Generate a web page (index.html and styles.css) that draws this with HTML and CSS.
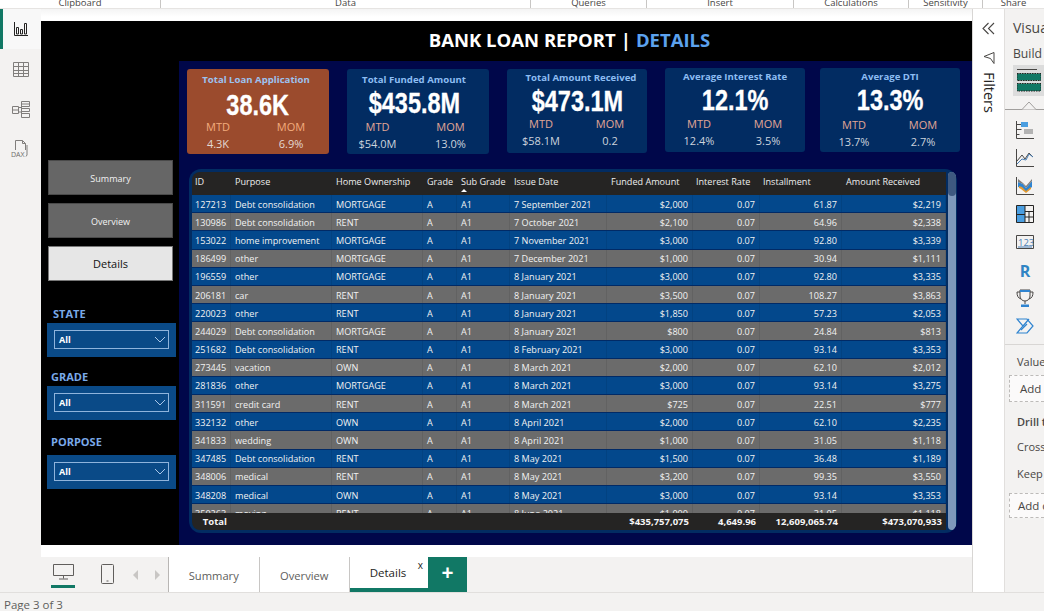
FILE: index.html
```html
<!DOCTYPE html>
<html lang="en">
<head>
<meta charset="utf-8">
<title>Bank Loan Report</title>
<link rel="stylesheet" href="styles.css">
</head>
<body>
<header class="ribbon">
  <div class="rb rb-1">Clipboard</div>
  <div class="rb rb-2">Data</div>
  <div class="rb rb-3">Queries</div>
  <div class="rb rb-4">Insert</div>
  <div class="rb rb-5">Calculations</div>
  <div class="rb rb-6">Sensitivity</div>
  <div class="rb rb-7">Share</div>
</header>
<div class="main">
  <nav class="nav">
    <div class="nav-item nav-active">
      <svg width="16" height="16" viewBox="0 0 16 16" fill="none" stroke="#252423"><path d="M1.500 1v13.500H15"/><path d="M3.500 13V6.500h2V13zM7.500 13V8.500h2V13zM11.500 13V2.500h2V13z"/></svg>
    </div>
    <div class="nav-item">
      <svg width="18" height="18" viewBox="0 0 18 18" fill="none" stroke="#807e7c"><path d="M1.500 2.500h15v14h-15zM1.500 6.500h15M1.500 10.500h15M1.500 13.500h15M6.500 2.500v14M11.500 2.500v14"/></svg>
    </div>
    <div class="nav-item">
      <svg width="20" height="20" viewBox="0 0 20 20" fill="none" stroke="#807e7c"><path d="M1.500 7.500h6v7h-6zM1.500 11h6M10.500 2.500h8v5h-8zM10.500 5h8M10.500 9.500h8v3h-8zM10.500 14.500h8v4h-8zM7.500 8.500h3M7.500 13h3M10.500 5v12"/></svg>
    </div>
    <div class="nav-item">
      <svg width="20" height="22" viewBox="0 0 20 22" fill="none" stroke="#807e7c"><path d="M4.500 12V2.500h7l3 3V12M11.500 2.500v3h3M16 7v10l-1 1.500"/><text class="dax" x="0" y="18.500">DAX</text></svg>
    </div>
  </nav>
  <div class="workspace">
    <section class="canvas">
      <aside class="side">
        <div class="btn">Summary</div>
        <div class="btn">Overview</div>
        <div class="btn btn-on">Details</div>
        <div class="slabel slabel-state">STATE</div>
        <div class="slicer"><div class="dd"><span>All</span><svg width="12" height="7" viewBox="0 0 12 7" fill="none" stroke="#a9c6e8"><path d="M1 1l5 5 5-5"/></svg></div></div>
        <div class="slabel slabel-grade">GRADE</div>
        <div class="slicer"><div class="dd"><span>All</span><svg width="12" height="7" viewBox="0 0 12 7" fill="none" stroke="#a9c6e8"><path d="M1 1l5 5 5-5"/></svg></div></div>
        <div class="slabel slabel-purpose">PORPOSE</div>
        <div class="slicer"><div class="dd"><span>All</span><svg width="12" height="7" viewBox="0 0 12 7" fill="none" stroke="#a9c6e8"><path d="M1 1l5 5 5-5"/></svg></div></div>
      </aside>
      <div class="report">
        <h1 class="title">BANK LOAN REPORT <span class="title-sep">|</span> <span class="title-hl">DETAILS</span></h1>
        <div class="panel">
          <div class="kpis">
            <div class="kpi kpi-hot">
              <div class="k-title">Total Loan Application</div>
              <div class="k-value">38.6K</div>
              <div class="k-grid"><span class="k-l">MTD</span><span class="k-l">MOM</span><span class="k-n">4.3K</span><span class="k-n">6.9%</span></div>
            </div>
            <div class="kpi kpi-left">
              <div class="k-title">Total Funded Amount</div>
              <div class="k-value">$435.8M</div>
              <div class="k-grid"><span class="k-l">MTD</span><span class="k-l">MOM</span><span class="k-n">$54.0M</span><span class="k-n">13.0%</span></div>
            </div>
            <div class="kpi kpi-short kpi-tight">
              <div class="k-title">Total Amount Received</div>
              <div class="k-value">$473.1M</div>
              <div class="k-grid"><span class="k-l">MTD</span><span class="k-l">MOM</span><span class="k-n">$58.1M</span><span class="k-n">0.2</span></div>
            </div>
            <div class="kpi kpi-short kpi-up">
              <div class="k-title">Average Interest Rate</div>
              <div class="k-value">12.1%</div>
              <div class="k-grid"><span class="k-l">MTD</span><span class="k-l">MOM</span><span class="k-n">12.4%</span><span class="k-n">3.5%</span></div>
            </div>
            <div class="kpi kpi-short kpi-up kpi-last">
              <div class="k-title">Average DTI</div>
              <div class="k-value">13.3%</div>
              <div class="k-grid"><span class="k-l">MTD</span><span class="k-l">MOM</span><span class="k-n">13.7%</span><span class="k-n">2.7%</span></div>
            </div>
          </div>
          <div class="tbl-wrap">
            <div class="tbl">
              <div class="row head">
                <span>ID</span><span>Purpose</span><span>Home Ownership</span><span>Grade</span><span class="sorted">Sub Grade</span><span>Issue Date</span><span>Funded Amount</span><span>Interest Rate</span><span>Installment</span><span>Amount Received</span>
              </div>
              <div class="rows">
                <div class="row"><span>127213</span><span>Debt consolidation</span><span>MORTGAGE</span><span>A</span><span>A1</span><span>7 September 2021</span><span class="r">$2,000</span><span class="r">0.07</span><span class="r">61.87</span><span class="r">$2,219</span></div>
                <div class="row"><span>130986</span><span>Debt consolidation</span><span>RENT</span><span>A</span><span>A1</span><span>7 October 2021</span><span class="r">$2,100</span><span class="r">0.07</span><span class="r">64.96</span><span class="r">$2,338</span></div>
                <div class="row"><span>153022</span><span>home improvement</span><span>MORTGAGE</span><span>A</span><span>A1</span><span>7 November 2021</span><span class="r">$3,000</span><span class="r">0.07</span><span class="r">92.80</span><span class="r">$3,339</span></div>
                <div class="row"><span>186499</span><span>other</span><span>MORTGAGE</span><span>A</span><span>A1</span><span>7 December 2021</span><span class="r">$1,000</span><span class="r">0.07</span><span class="r">30.94</span><span class="r">$1,111</span></div>
                <div class="row"><span>196559</span><span>other</span><span>MORTGAGE</span><span>A</span><span>A1</span><span>8 January 2021</span><span class="r">$3,000</span><span class="r">0.07</span><span class="r">92.80</span><span class="r">$3,335</span></div>
                <div class="row"><span>206181</span><span>car</span><span>RENT</span><span>A</span><span>A1</span><span>8 January 2021</span><span class="r">$3,500</span><span class="r">0.07</span><span class="r">108.27</span><span class="r">$3,863</span></div>
                <div class="row"><span>220023</span><span>other</span><span>RENT</span><span>A</span><span>A1</span><span>8 January 2021</span><span class="r">$1,850</span><span class="r">0.07</span><span class="r">57.23</span><span class="r">$2,053</span></div>
                <div class="row"><span>244029</span><span>Debt consolidation</span><span>MORTGAGE</span><span>A</span><span>A1</span><span>8 January 2021</span><span class="r">$800</span><span class="r">0.07</span><span class="r">24.84</span><span class="r">$813</span></div>
                <div class="row"><span>251682</span><span>Debt consolidation</span><span>RENT</span><span>A</span><span>A1</span><span>8 February 2021</span><span class="r">$3,000</span><span class="r">0.07</span><span class="r">93.14</span><span class="r">$3,353</span></div>
                <div class="row"><span>273445</span><span>vacation</span><span>OWN</span><span>A</span><span>A1</span><span>8 March 2021</span><span class="r">$2,000</span><span class="r">0.07</span><span class="r">62.10</span><span class="r">$2,012</span></div>
                <div class="row"><span>281836</span><span>other</span><span>MORTGAGE</span><span>A</span><span>A1</span><span>8 March 2021</span><span class="r">$3,000</span><span class="r">0.07</span><span class="r">93.14</span><span class="r">$3,275</span></div>
                <div class="row"><span>311591</span><span>credit card</span><span>RENT</span><span>A</span><span>A1</span><span>8 March 2021</span><span class="r">$725</span><span class="r">0.07</span><span class="r">22.51</span><span class="r">$777</span></div>
                <div class="row"><span>332132</span><span>other</span><span>OWN</span><span>A</span><span>A1</span><span>8 April 2021</span><span class="r">$2,000</span><span class="r">0.07</span><span class="r">62.10</span><span class="r">$2,235</span></div>
                <div class="row"><span>341833</span><span>wedding</span><span>OWN</span><span>A</span><span>A1</span><span>8 April 2021</span><span class="r">$1,000</span><span class="r">0.07</span><span class="r">31.05</span><span class="r">$1,118</span></div>
                <div class="row"><span>347485</span><span>Debt consolidation</span><span>RENT</span><span>A</span><span>A1</span><span>8 May 2021</span><span class="r">$1,500</span><span class="r">0.07</span><span class="r">36.48</span><span class="r">$1,189</span></div>
                <div class="row"><span>348006</span><span>medical</span><span>RENT</span><span>A</span><span>A1</span><span>8 May 2021</span><span class="r">$3,200</span><span class="r">0.07</span><span class="r">99.35</span><span class="r">$3,550</span></div>
                <div class="row"><span>348208</span><span>medical</span><span>OWN</span><span>A</span><span>A1</span><span>8 May 2021</span><span class="r">$3,000</span><span class="r">0.07</span><span class="r">93.14</span><span class="r">$3,353</span></div>
                <div class="row"><span>350263</span><span>moving</span><span>RENT</span><span>A</span><span>A1</span><span>8 June 2021</span><span class="r">$1,000</span><span class="r">0.07</span><span class="r">31.05</span><span class="r">$1,118</span></div>
              </div>
              <div class="row foot">
                <span class="r">Total</span><span></span><span></span><span></span><span></span><span></span><span class="r">$435,757,075</span><span class="r">4,649.96</span><span class="r">12,609,065.74</span><span class="r">$473,070,933</span>
              </div>
            </div>
            <div class="scroll"><div class="thumb"></div></div>
          </div>
        </div>
      </div>
    </section>
    <div class="tabbar">
      <div class="devices">
        <div class="dev dev-on">
          <svg width="21" height="16" viewBox="0 0 21 16" fill="none" stroke="#605e5c"><path d="M.5.500h20v11H.5zM10.500 11.500v3M6 15h9"/></svg>
        </div>
        <div class="dev">
          <svg width="14" height="21" viewBox="0 0 14 21" fill="none" stroke="#605e5c"><rect x=".5" y=".5" width="12" height="19" rx="1"/><path d="M5.500 17h2"/></svg>
        </div>
        <div class="arrows">
          <svg width="6" height="10" viewBox="0 0 6 10" fill="#c8c6c4"><path d="M5 0v10L0 5z"/></svg>
          <svg width="6" height="10" viewBox="0 0 6 10" fill="#c8c6c4"><path d="M1 0v10l5-5z"/></svg>
        </div>
      </div>
      <div class="tab">Summary</div>
      <div class="tab">Overview</div>
      <div class="tab tab-on">Details<span class="tab-x">x</span></div>
      <div class="tab-add">+</div>
    </div>
  </div>
  <aside class="filters">
    <svg class="f-chev" width="13" height="13" viewBox="0 0 13 13" fill="none" stroke="#484644" stroke-width="1.100"><path d="M6.500 1L1 6.500 6.500 12M12 1L6.500 6.500 12 12"/></svg>
    <svg class="f-funnel" width="12" height="12" viewBox="0 0 12 12" fill="none" stroke="#484644"><path d="M11 .5L1 4.500 7.500 6.500 11 11.500z"/></svg>
    <div class="f-text">Filters</div>
  </aside>
  <aside class="viz">
    <div class="v-title">Visualizations</div>
    <div class="v-build">Build visual</div>
    <div class="v-tile">
      <svg width="24" height="24" viewBox="0 0 24 24"><path d="M0 1.500h20" stroke="#484644" fill="none"/><rect x="0" y="5.500" width="24" height="7" fill="#117865" stroke="#252423" stroke-dasharray="1.500 1"/><rect x="0" y="15.500" width="24" height="7.500" fill="#117865" stroke="#252423" stroke-dasharray="1.500 1"/></svg>
    </div>
    <div class="v-rule"><svg class="v-notch" width="18" height="9" viewBox="0 0 18 9" fill="#f3f2f1" stroke="#a19f9d"><path d="M0 8.500h2L9 1l7 7.500h2"/></svg></div>
    <div class="v-icons">
      <div class="v-ic"><svg width="18" height="18" viewBox="0 0 18 18" fill="none"><path d="M.5 0v17.500H18M.5 3.500h5M.5 8.500h5M.5 13.500h3" stroke="#484644"/><rect x="5" y="1" width="7" height="5" fill="#4a9ee0"/><rect x="8" y="8" width="9" height="5" fill="#b3b3b3"/></svg></div>
      <div class="v-ic"><svg width="18" height="18" viewBox="0 0 18 18" fill="none" stroke="#484644"><path d="M.5 0v17.500H18"/><path d="M1 12l5-6 3 4 4-6 4 4" stroke="#484644"/><path d="M1 15l5-5 4 1 3-6 4 3" stroke="#4a7fb5"/></svg></div>
      <div class="v-ic"><svg width="18" height="18" viewBox="0 0 18 18" fill="none"><path d="M.5 0v17.500H18" stroke="#484644"/><path d="M2 5l5 2 3 4 6-7v6l-6 5-4-4-4-1z" fill="#2f84d0"/><path d="M2 2l5 4 3 3 6-7v2l-6 7-3-4-5-2z" fill="#7f7d7b"/><path d="M3 9l3 1 4 4 5-4v2l-5 4-5-4-2-1z" fill="#e59a2f"/></svg></div>
      <div class="v-ic"><svg width="18" height="18" viewBox="0 0 18 18" fill="none"><rect x=".5" y=".5" width="8.500" height="9" fill="#4a9ee0"/><rect x=".5" y="9.500" width="8.500" height="8" fill="#4a9ee0"/><path d="M.5.500h17v17H.5zM.5 9.500H9M9 .5v17M9 6.500h8.500M13 6.500v11M9 12h8.500" stroke="#252423"/></svg></div>
      <div class="v-ic"><svg width="18" height="14" viewBox="0 0 18 14" fill="none"><path d="M.5.500h17v13H.5z" stroke="#484644"/><text class="i123" x="2" y="10.500">123</text><path d="M2 12h14" stroke="#4a7fb5"/></svg></div>
      <div class="v-ic i-r">R</div>
      <div class="v-ic"><svg width="18" height="18" viewBox="0 0 18 18" fill="none"><path d="M4 1h10v6a5 5 0 01-10 0z" stroke="#484644"/><path d="M4 1h10v2H4z" fill="#2f84d0"/><path d="M4 3H1c0 4 1 6 4 7M14 3h3c0 4-1 6-4 7M9 12v3" stroke="#484644"/><path d="M5 15.500h8V18H5z" fill="#2f84d0"/></svg></div>
      <div class="v-ic"><svg width="18" height="16" viewBox="0 0 18 16" fill="none" stroke="#2f84d0" stroke-width="1.200"><path d="M1 1h10l6 7-6 7H1l6-7z"/><path d="M7 8l6-7M5 12l6-6"/></svg></div>
    </div>
    <div class="v-sect">
      <div class="v-lbl">Values</div>
      <div class="v-add v-add-1">Add data fields here</div>
      <div class="v-lbl v-bold">Drill through</div>
      <div class="v-lbl v-cross">Cross-report</div>
      <div class="v-lbl v-keep">Keep all filters</div>
      <div class="v-add v-add-2">Add drill-through fields here</div>
    </div>
  </aside>
</div>
<footer class="status">Page 3 of 3</footer>
</body>
</html>
```
FILE: styles.css
```css
* { box-sizing: border-box; }
html, body { margin: 0; padding: 0; }
body {
  width: 1044px; height: 611px; overflow: hidden;
  display: flex; flex-direction: column;
  font-family: "Open Sans", "Noto Sans", sans-serif;
  background: #f3f2f1; color: #252423;
}
/* ribbon */
.ribbon {
  height: 9px; flex: none; display: flex; overflow: hidden;
  background: #fff; border-bottom: 1px solid #e6e4e2;
}
.rb {
  height: 8px; display: flex; justify-content: center; align-items: flex-end;
  font-size: 9.500px; line-height: 10px; color: #484644;
  border-right: 1px solid #c8c6c4; white-space: nowrap;
}
.rb-1 { width: 161px; }
.rb-2 { width: 370px; }
.rb-3 { width: 116px; }
.rb-4 { width: 147px; }
.rb-5 { width: 115px; }
.rb-6 { width: 74px; }
.rb-7 { flex: 1; border-right: 0; }
/* main */
.main { flex: 1; display: flex; min-height: 0; }
.nav { width: 41px; flex: none; background: #f3f2f1; display: flex; flex-direction: column; }
.nav-item { height: 40px; display: flex; align-items: center; justify-content: center; }
.nav-active { background: #f8f8f8; border-left: 3px solid #117865; padding-right: 3px; }
.dax { font: 7px "Open Sans", sans-serif; fill: #6f6d6b; stroke: none; }
.workspace { flex: 1; min-width: 0; display: flex; flex-direction: column; padding-top: 12px; background: linear-gradient(#f4f4f4, #fff 8px); }
/* canvas */
.canvas { height: 524px; flex: none; display: flex; background: #000; }
.side { width: 138px; flex: none; padding: 139px 0 0 7px; display: flex; flex-direction: column; align-items: flex-start; }
.btn {
  width: 125px; height: 35px; margin-bottom: 8px; flex: none; padding-top: 1px;
  display: flex; align-items: center; justify-content: center;
  background: #666; border: 1px solid #4a4a4a; color: #f2f2f2; font-size: 9px;
}
.btn-on { background: #e6e6e6; border-color: #777; color: #111; font-size: 11px; margin-bottom: 0; padding-top: 0; }
.slabel { height: 16px; line-height: 16px; font-size: 11px; font-weight: 700; color: #7aa9e8; flex: none; margin-left: -1px; }
.slabel-state { margin-top: 25px; margin-bottom: 1px; padding-left: 6px; }
.slabel-grade { margin-top: 12px; margin-bottom: 1px; padding-left: 4px; }
.slabel-purpose { margin-top: 14px; margin-bottom: 5px; padding-left: 4px; }
.slicer { width: 129px; height: 34px; flex: none; margin-left: -1px; background: #0a4a87; padding: 7px; }
.dd { height: 19px; border: 1px solid #8fb4dc; display: flex; align-items: center; justify-content: space-between; padding: 0 2px 0 4px; color: #fff; font-size: 9px; font-weight: 700; }
.report { flex: 1; min-width: 0; display: flex; flex-direction: column; }
.title { height: 37px; margin: 0 0 3px; flex: none; display: flex; align-items: center; justify-content: center; gap: 5px; padding-right: 12px; font-size: 18.500px; font-weight: 700; color: #fff; white-space: nowrap; }
.title-hl { color: #5ca2ee; }
.panel { flex: 1; background: #00074a; padding: 8px 0 0 8px; display: flex; flex-direction: column; min-height: 0; }
/* KPI */
.kpis { display: flex; gap: 18px; align-items: flex-start; height: 85px; flex: none; }
.kpi { width: 142px; height: 85px; flex: none; background: #022c62; border-radius: 3px; padding-top: 4px; display: flex; flex-direction: column; align-items: center; }
.kpi-hot { background: #9b4b2d; }
.kpi-left { padding-right: 8px; }
.kpi-short { height: 84px; width: 140px; padding-top: 2px; }
.kpi-up { margin-top: -1px; }
.kpi-last { margin-left: -3px; }
.k-title { font-size: 9.600px; line-height: 14px; font-weight: 700; color: #8dbdf3; white-space: nowrap; }
.kpi-tight .k-title { margin-left: 8px; }
.kpi-hot .k-title { color: #9cc2f0; margin-right: 4px; }
.k-value { font-family: "Liberation Sans", Roboto, sans-serif; font-size: 29px; line-height: 30px; font-weight: 700; color: #fff; -webkit-text-stroke: .3px #fff; white-space: nowrap; margin-top: 1px; transform: scaleX(.81); }
.kpi-hot .k-value { margin-top: 3px; }
.k-grid { margin: 1px 0 0 -7px; display: grid; grid-template-columns: 73px 73px; justify-items: center; }
.kpi-hot .k-grid { margin-top: -1px; }
.kpi-left .k-grid { margin-left: 0; }
.kpi-short .k-grid { grid-template-columns: 69px 69px; margin: 1px 0 0 -3px; }
.kpi-tight .k-grid { margin-top: 0; }
.kpi-last .k-grid { margin-top: 2px; }
.k-l { font-size: 11px; line-height: 16px; color: #e2a795; }
.kpi-hot .k-l { color: #f3ab7c; }
.k-n { font-size: 11px; line-height: 18px; color: #ccd3dd; }
.kpi-hot .k-n { color: #e4d9d3; }
/* table */
.tbl-wrap { width: 768px; height: 364px; flex: none; margin: 15px 0 0 2px; background: #022c62; border-radius: 12px; padding: 3px 1px 3px 3px; display: flex; gap: 2px; overflow: hidden; }
.tbl { width: 754px; flex: none; display: flex; flex-direction: column; border-radius: 8px 0 0 8px; overflow: hidden; }
.row {
  display: grid; grid-template-columns: 39px 101px 91px 34px 53px 97px 86px 67px 82px 104px;
  height: 18.200px; flex: none; align-items: center; font-size: 9.100px; line-height: 12px; color: #f2f2f2;
  background: #03488c; border-bottom: 1px solid #012a66; white-space: nowrap;
}
.row:nth-child(even) { background: #6b6b6b; }
.row > span { padding: 2px 4px 0 3px; height: 100%; display: flex; align-items: center; border-right: 1px solid rgba(0,0,0,.08); overflow: hidden; }
.row > span:nth-child(n+2):nth-child(-n+6) { padding-left: 4px; }
.row > .r { justify-content: flex-end; }
.rows { height: 318px; flex: none; overflow: hidden; }
.head { height: 23px; background: #252423; border: 0; color: #eee; }
.head > span { border: 0; position: relative; padding-top: 0; padding-bottom: 4px; }
.head > span:nth-child(n+7) { padding-left: 3px; }
.head > span:nth-child(7), .head > span:nth-child(10) { padding-left: 4px; }
.sorted::after { content: ""; position: absolute; left: 4px; bottom: 3px; border: 3px solid transparent; border-top: 0; border-bottom: 3px solid #fff; }
.foot { height: 17px; margin-top: auto; background: #252423; border: 0; font-size: 9.500px; font-weight: 700; color: #f5f5f5; }
.foot > span { border: 0; padding-top: 0; }
.scroll { width: 8px; flex: none; background: #7e98bb; border-radius: 4px; height: 358px; }
.thumb { height: 24px; background: #3e5980; border-radius: 4px; }
/* tabs */
.tabbar { margin-top: 12px; height: 35px; flex: none; display: flex; background: #f3f2f1; }
.devices { width: 128px; flex: none; display: flex; align-items: flex-start; padding-left: 10px; border-right: 1px solid #b8b6b4; }
.dev { width: 24px; height: 31px; margin-right: 21px; display: flex; justify-content: center; padding-top: 7px; flex: none; }
.dev-on { border-bottom: 3px solid #117865; }
.arrows { display: flex; gap: 15px; padding: 13px 0 0 0; margin-left: -8px; }
.tab { width: 90.500px; flex: none; background: #fff; display: flex; align-items: center; justify-content: center; font-size: 11.200px; color: #605e5c; border-right: 1px solid #c8c6c4; padding-top: 2px; }
.tab-on { width: 78px; font-size: 11.500px; color: #252423; border-right: 0; border-bottom: 4px solid #117865; position: relative; padding: 0 2px 0 0; }
.tab-x { position: absolute; right: 5px; top: 2px; font-size: 10px; line-height: 12px; }
.tab-add { width: 39px; flex: none; background: #117865; color: #fff; font-size: 21px; font-weight: 700; line-height: 31px; text-align: center; }
/* filters */
.filters { width: 32px; flex: none; background: #fff; display: flex; flex-direction: column; align-items: center; padding-top: 13px; border-left: 1px solid #d8d6d4; }
.f-funnel { margin-top: 17px; }
.f-text { writing-mode: vertical-rl; font-size: 14.500px; line-height: 16px; margin-top: 8px; color: #252423; }
/* viz */
.viz { width: 40px; flex: none; overflow: hidden; background: #f3f2f1; display: flex; flex-direction: column; padding-top: 9px; border-left: 1px solid #e1dfdd; white-space: nowrap; color: #484644; }
.v-title { font-size: 14px; line-height: 20px; padding-left: 8px; }
.v-build { font-size: 12.200px; line-height: 16px; padding-left: 8px; margin-top: 8px; }
.v-tile { width: 31px; height: 31px; margin: 3px 0 0 8px; background: #dcdcdc; padding: 3px 0 0 4px; flex: none; overflow: hidden; }
.v-rule { margin-top: 13px; height: 1px; background: #a19f9d; position: relative; flex: none; }
.v-notch { position: absolute; left: 15px; top: -8px; }
.v-icons { display: grid; grid-auto-rows: 28px; flex: none; padding: 6px 0 0 11px; }
.v-ic { width: 18px; display: flex; align-items: center; justify-content: center; }
.i123 { font: 9.500px "Open Sans", sans-serif; fill: #4a7fb5; }
.i-r { font-size: 16px; font-weight: 700; color: #2f84c4; padding-top: 2px; }
.v-sect { margin-top: 4px; border-top: 1px solid #d8d6d4; padding-top: 9px; }
.v-lbl { font-size: 11px; line-height: 16px; padding-left: 12px; }
.v-bold { font-weight: 600; margin-top: 12px; }
.v-cross { margin-top: 9px; }
.v-keep { margin-top: 11px; }
.v-add { height: 27px; margin: 5px 0 0 4px; padding-left: 10px; border: 1px dashed #bdbbb9; border-right: 0; background: #fbfafa; font-size: 11.500px; line-height: 26px; }
.v-add-2 { height: 25px; margin-top: 11px; padding-left: 8px; line-height: 24px; }
/* status */
.status { height: 19px; flex: none; background: #f3f2f1; border-top: 1px solid #e1dfdd; font-size: 11.500px; line-height: 24px; padding-left: 4px; color: #605e5c; overflow: hidden; }
```
